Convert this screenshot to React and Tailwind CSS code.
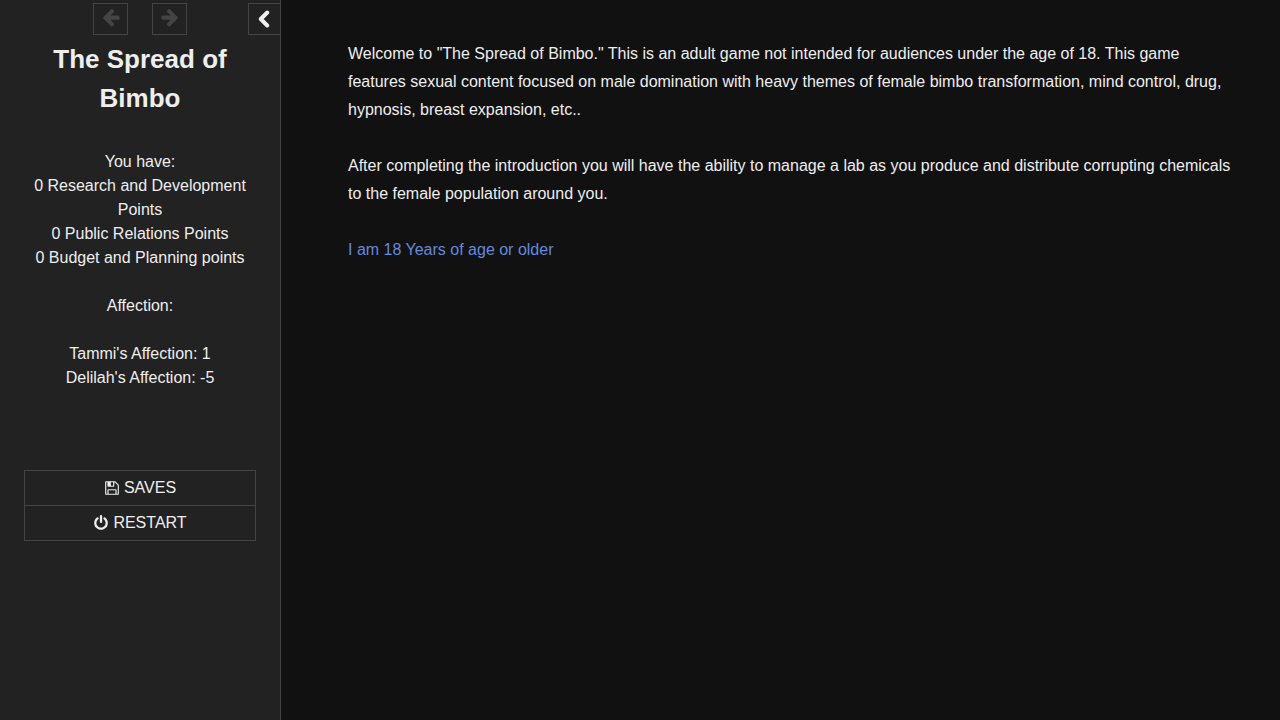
const iconPaths = {
    back: "M1664 896v128q0 53-32.5 90.5t-84.5 37.5h-704l293 294q38 36 38 90t-38 90l-75 76q-37 37-90 37-52 0-91-37l-651-652q-37-37-37-90 0-52 37-91l651-650q38-38 91-38 52 0 90 38l75 74q38 38 38 91t-38 91l-293 293h704q52 0 84.5 37.5t32.5 90.5z",
    save: "M512 1536h768v-384h-768v384zm896 0h128v-896q0-14-10-38.5t-20-34.5l-281-281q-10-10-34-20t-39-10v416q0 40-28 68t-68 28h-576q-40 0-68-28t-28-68v-416h-128v1280h128v-416q0-40 28-68t68-28h832q40 0 68 28t28 68v416zm-384-928v-320q0-13-9.5-22.5t-22.5-9.5h-192q-13 0-22.5 9.5t-9.5 22.5v320q0 13 9.5 22.5t22.5 9.5h192q13 0 22.5-9.5t9.5-22.5zm640 32v928q0 40-28 68t-68 28h-1344q-40 0-68-28t-28-68v-1344q0-40 28-68t68-28h928q40 0 88 20t76 48l280 280q28 28 48 76t20 88z",
    power: "M1664 896q0 156-61 298t-164 245-245 164-298 61-298-61-245-164-164-245-61-298q0-182 80.5-343t226.5-270q43-32 95.5-25t83.5 50q32 42 24.5 94.5t-49.5 84.5q-98 74-151.5 181t-53.5 228q0 104 40.5 198.5t109.5 163.5 163.5 109.5 198.5 40.5 198.5-40.5 163.5-109.5 109.5-163.5 40.5-198.5q0-121-53.5-228t-151.5-181q-42-32-49.5-84.5t24.5-94.5q31-43 84-50t95 25q146 109 226.5 270t80.5 343zm-640-768v640q0 52-38 90t-90 38-90-38-38-90v-640q0-52 38-90t90-38 90 38 38 90z",
};

const points = [
    "0 Research and Development Points",
    "0 Public Relations Points",
    "0 Budget and Planning points",
];

const affection = ["Tammi's Affection: 1", "Delilah's Affection: -5"];

const menuItems = [
    { label: "Saves", icon: "save" },
    { label: "Restart", icon: "power" },
];

function Icon({ name, className }) {
    return (
        <svg viewBox="0 0 1792 1792" fill="currentColor" className={className} aria-hidden="true">
            <path d={iconPaths[name]} />
        </svg>
    );
}

function HistoryButton({ label, flip }) {
    return (
        <button
            disabled
            aria-label={label}
            className="flex h-8 w-[35px] items-center justify-center border border-[#444] pb-1 text-[#444]"
        >
            <Icon name="back" className={flip ? "size-5 -scale-x-100" : "size-5"} />
        </button>
    );
}

function Sidebar() {
    return (
        <aside className="w-[281px] shrink-0 border-r border-[#444] bg-[#222] text-center">
            <div className="grid grid-cols-[1fr_auto_1fr] pt-[3px]">
                <div className="col-start-2 flex gap-6">
                    <HistoryButton label="Go backward" />
                    <HistoryButton label="Go forward" flip />
                </div>
                <button
                    aria-label="Toggle the sidebar"
                    className="flex h-8 w-8 items-center justify-center justify-self-end border border-r-0 border-[#444] pr-px"
                >
                    <svg viewBox="0 0 12 18" className="h-[18px] w-3" fill="none" stroke="currentColor" strokeWidth="4" strokeLinecap="round" strokeLinejoin="round" aria-hidden="true">
                        <path d="M9.2 2.5 2.8 9l6.4 6.5" />
                    </svg>
                </button>
            </div>

            <div className="px-6 pt-[5px]">
                <h1 className="text-[26px] leading-[39px] font-bold">The Spread of Bimbo</h1>

                <div className="mt-8 leading-6">
                    <p>You have:</p>
                    {points.map((line) => (
                        <p key={line}>{line}</p>
                    ))}
                    <p className="my-6">Affection:</p>
                    {affection.map((line) => (
                        <p key={line}>{line}</p>
                    ))}
                </div>

                <ul className="mt-20 divide-y divide-[#444] border border-[#444]">
                    {menuItems.map((item) => (
                        <li key={item.label}>
                            <button className="flex h-[34px] w-full items-center justify-center gap-1 uppercase">
                                <Icon name={item.icon} className="size-4" />
                                {item.label}
                            </button>
                        </li>
                    ))}
                </ul>
            </div>
        </aside>
    );
}

export default function App() {
    return (
        <div className="flex min-h-screen bg-[#111] font-['Liberation_Sans',sans-serif] text-base text-[#eee]">
            <Sidebar />
            <main className="flex-1 py-10 pr-10 pl-[67px] leading-7">
                <div className="flex max-w-[890px] flex-col gap-7">
                    <p>
                        Welcome to "The Spread of Bimbo." This is an adult game not intended for audiences under the age of 18. This game
                        features sexual content focused on male domination with heavy themes of female bimbo transformation, mind control, drug,
                        hypnosis, breast expansion, etc..
                    </p>
                    <p>
                        After completing the introduction you will have the ability to manage a lab as you produce and distribute corrupting chemicals
                        to the female population around you.
                    </p>
                    <p>
                        <a href="#start" className="text-[#68d] hover:text-[#8af] hover:underline">I am 18 Years of age or older</a>
                    </p>
                </div>
            </main>
        </div>
    );
}
